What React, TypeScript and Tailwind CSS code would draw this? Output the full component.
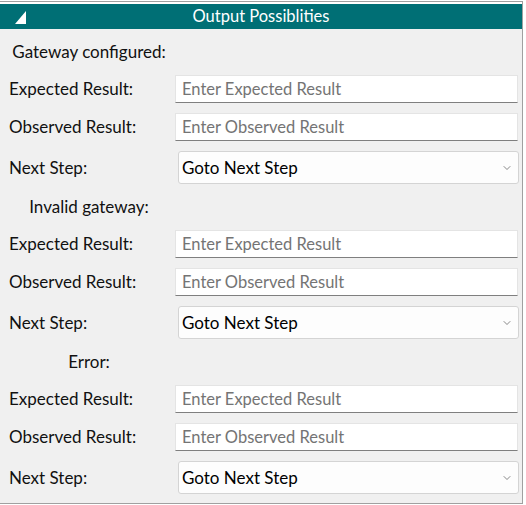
import { ChevronDown } from "lucide-react";

const sections = ["Gateway configured:", "Invalid gateway:", "Error:"];

function Row({ label, children }: { label: string; children: React.ReactNode }) {
  return (
    <div className="flex items-center">
      <div className="w-[175px] pl-[9px] text-[17px] text-[#111]">{label}</div>
      {children}
    </div>
  );
}

function Section({ title }: { title: string }) {
  return (
    <div className="flex flex-col">
      <div className="h-[46px] w-[178px] flex items-center justify-center text-[17px] text-[#111]">{title}</div>
      <Row label="Expected Result:">
        <input
          placeholder="Enter Expected Result"
          className="h-[28px] w-[343px] bg-white border border-[#e4e4e4] border-b-[#7f7f7f] px-[6px] text-[16.5px] placeholder:text-[#747474] outline-none"
        />
      </Row>
      <div className="h-[10px]" />
      <Row label="Observed Result:">
        <input
          placeholder="Enter Observed Result"
          className="h-[28px] w-[343px] bg-white border border-[#e4e4e4] border-b-[#7f7f7f] px-[6px] text-[16.5px] placeholder:text-[#747474] outline-none"
        />
      </Row>
      <div className="h-[10px]" />
      <Row label="Next Step:">
        <div className="ml-[3px] h-[33px] w-[341px] bg-[#fdfdfd] border border-[#d4d4d4] rounded-[3px] flex items-center justify-between pl-[3px] pr-[5px]">
          <span className="text-[17px] text-black">Goto Next Step</span>
          <ChevronDown size={12} strokeWidth={1.4} className="text-[#555]" />
        </div>
      </Row>
    </div>
  );
}

export default function App() {
  return (
    <div className="w-[526px] h-[505px] bg-white pt-px" style={{ fontFamily: "Lato, 'Noto Sans', sans-serif" }}>
      <div className="w-[523px] h-[503px] border border-l-0 border-[#a0a0a0] bg-white flex flex-col">
        <div className="mt-[2px] h-[25px] bg-[#006f75] flex items-center relative">
          <svg width="12" height="13" viewBox="0 0 12 13" className="absolute left-[15px] top-[7px]">
            <polygon points="11,0 11,13 0,13" fill="white" />
          </svg>
          <div className="flex-1 text-center text-white text-[16.5px]">Output Possiblities</div>
        </div>
        <div className="flex-1 bg-[#f0f0f0] flex flex-col">
          {sections.map((s) => (
            <Section key={s} title={s} />
          ))}
        </div>
      </div>
    </div>
  );
}
